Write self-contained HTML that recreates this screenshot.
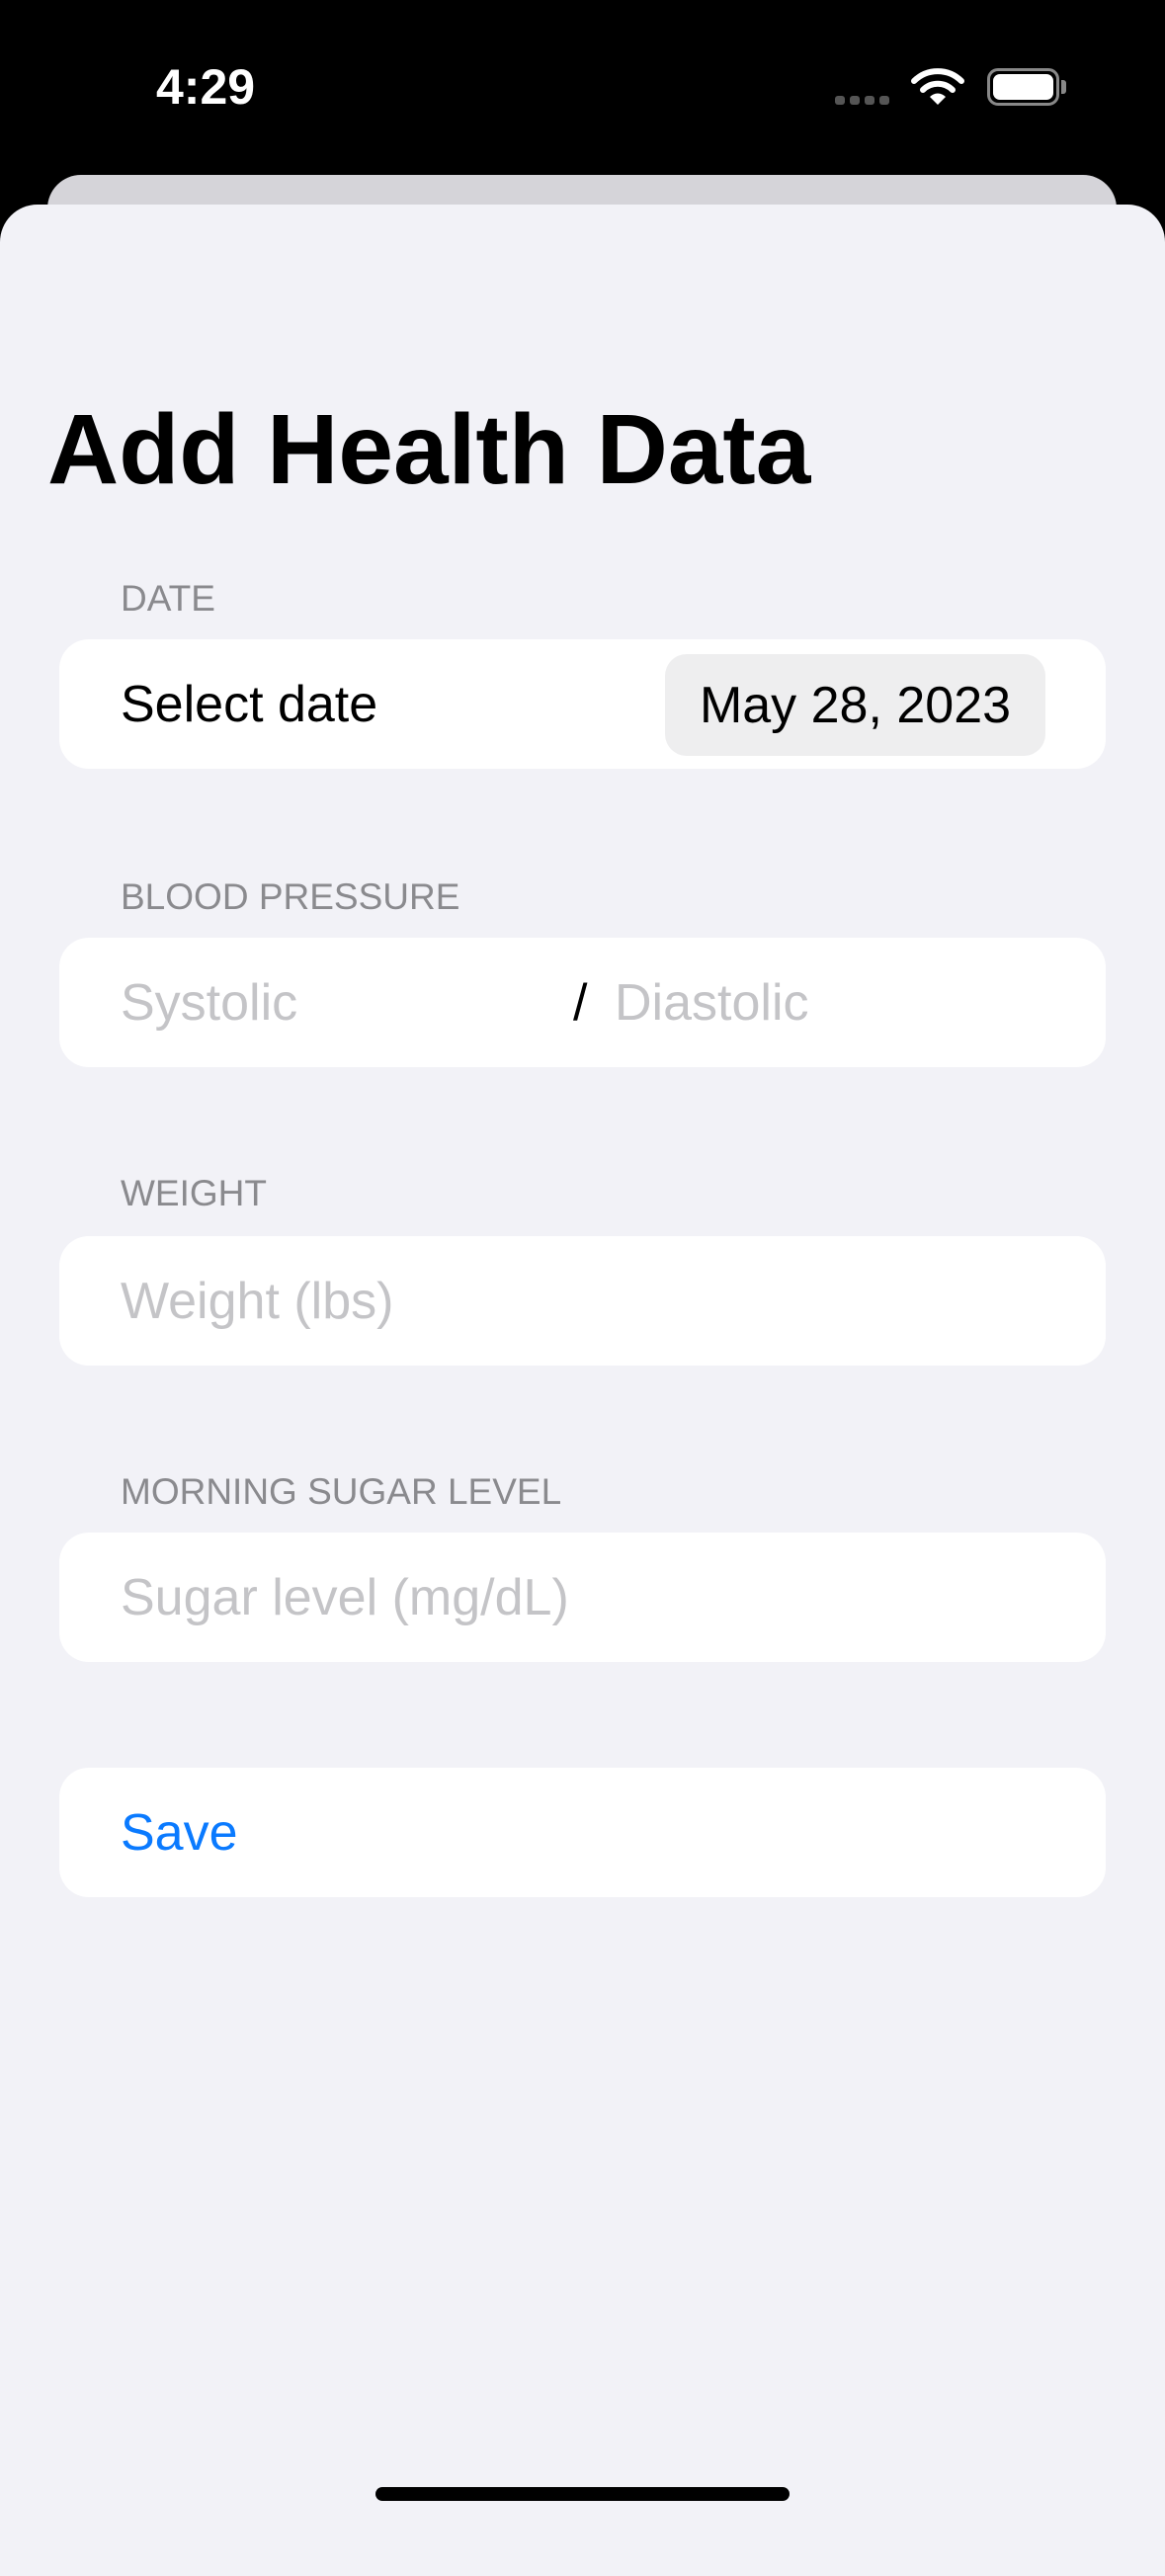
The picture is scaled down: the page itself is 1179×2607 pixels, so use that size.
<!DOCTYPE html>
<html><head><meta charset="utf-8"><style>
*{margin:0;padding:0;box-sizing:border-box}
body{width:1179px;height:2556px;background:#000;position:relative;overflow:hidden;font-family:"Liberation Sans",sans-serif}
.back{position:absolute;left:48px;top:177px;width:1082px;height:80px;background:#d5d4d9;border-radius:34px 34px 0 0}
.sheet{position:absolute;left:0;top:207px;width:1179px;height:2400px;background:#f2f2f7;border-radius:38px 38px 0 0}
.title{position:absolute;left:48px;top:400px;font-size:100px;font-weight:bold;color:#000;line-height:110px;letter-spacing:0}
.lbl{position:absolute;left:122px;font-size:37px;color:#8a8a8e;line-height:40px}
.card{position:absolute;left:60px;width:1059px;height:131px;background:#fff;border-radius:30px;display:flex;align-items:center;padding-left:62px;font-size:52px;color:#000}
.ph{color:#c4c4c7}
.pill{position:absolute;left:613px;top:15px;width:385px;height:103px;background:#eeeeef;border-radius:22px;display:flex;align-items:center;justify-content:center;font-size:52px}
.home{position:absolute;left:380px;top:2517px;width:419px;height:14px;background:#000;border-radius:7px}
</style></head><body>
<div style="position:absolute;left:158px;top:58px;color:#fff;font-size:50px;font-weight:bold;line-height:60px">4:29</div>
<div style="position:absolute;left:845px;top:97px;display:flex;gap:5px">
<div style="width:10px;height:9px;background:#555;border-radius:3px"></div><div style="width:10px;height:9px;background:#555;border-radius:3px"></div><div style="width:10px;height:9px;background:#555;border-radius:3px"></div><div style="width:10px;height:9px;background:#555;border-radius:3px"></div></div>
<svg style="position:absolute;left:922px;top:68px" width="54" height="40" viewBox="0 0 54 40">
<path d="M3 14 A34 34 0 0 1 51 14" stroke="#fff" stroke-width="6" fill="none" stroke-linecap="round"/>
<path d="M12 23 A21 21 0 0 1 42 23" stroke="#fff" stroke-width="6" fill="none" stroke-linecap="round"/>
<path d="M27 38 L19 30 A11 11 0 0 1 35 30 Z" fill="#fff"/></svg>
<div style="position:absolute;left:999px;top:69px;width:73px;height:38px;border:3px solid #888;border-radius:11px;padding:3px"><div style="width:100%;height:100%;background:#fff;border-radius:7px"></div></div>
<div style="position:absolute;left:1074px;top:81px;width:5px;height:14px;background:#888;border-radius:0 3px 3px 0"></div>
<div class="back"></div>
<div class="sheet"></div>
<div class="title">Add Health Data</div>
<div class="lbl" style="top:586px">DATE</div>
<div class="card" style="top:647px">Select date<div class="pill">May 28, 2023</div></div>
<div class="lbl" style="top:888px">BLOOD PRESSURE</div>
<div class="card" style="top:949px"><span class="ph">Systolic</span><span style="position:absolute;left:520px">/</span><span class="ph" style="position:absolute;left:562px">Diastolic</span></div>
<div class="lbl" style="top:1188px">WEIGHT</div>
<div class="card" style="top:1251px"><span class="ph">Weight (lbs)</span></div>
<div class="lbl" style="top:1490px">MORNING SUGAR LEVEL</div>
<div class="card" style="top:1551px"><span class="ph">Sugar level (mg/dL)</span></div>
<div class="card" style="top:1789px;color:#0a7aff">Save</div>
<div class="home"></div>
</body></html>
